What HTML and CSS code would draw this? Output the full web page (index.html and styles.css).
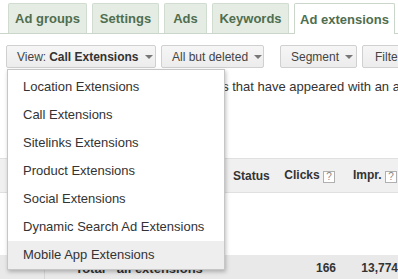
FILE: index.html
```html
<!DOCTYPE html>
<html>
<head>
<meta charset="utf-8">
<link rel="stylesheet" href="styles.css">
</head>
<body>
<div class="page">
  <div class="tabs">
    <div class="tab t1">Ad groups</div>
    <div class="tab t2">Settings</div>
    <div class="tab t3">Ads</div>
    <div class="tab t4">Keywords</div>
    <div class="tab active t5">Ad extensions</div>
  </div>
  <div class="toolbar">
    <div class="btn b-view">View: <b>Call Extensions</b><span class="caret"></span></div>
    <div class="btn b-del">All but deleted<span class="caret"></span></div>
    <div class="sep"></div>
    <div class="btn b-seg">Segment<span class="caret"></span></div>
    <div class="btn b-filter">Filter</div>
  </div>
  <p class="desc">These are statistics for call extensions that have appeared with an ad.</p>
  <div class="table">
    <div class="row head">
      <div class="c-first"></div>
      <div class="c-name"></div>
      <div class="c-status">Status</div>
      <div class="c-clicks">Clicks <span class="help">?</span></div>
      <div class="c-impr">Impr. <span class="help">?</span></div>
    </div>
    <div class="body"></div>
    <div class="row total">
      <div class="c-first"></div>
      <div class="c-name">Total - all extensions</div>
      <div class="c-status"></div>
      <div class="c-clicks">166</div>
      <div class="c-impr">13,774</div>
    </div>
  </div>
  <div class="menu">
    <div class="item">Location Extensions</div>
    <div class="item">Call Extensions</div>
    <div class="item">Sitelinks Extensions</div>
    <div class="item">Product Extensions</div>
    <div class="item">Social Extensions</div>
    <div class="item">Dynamic Search Ad Extensions</div>
    <div class="item hover">Mobile App Extensions</div>
  </div>
</div>
</body>
</html>
```
FILE: styles.css
```css
* { box-sizing: border-box; }
html, body { margin: 0; padding: 0; background: #fff; }
body { font-family: "Liberation Sans", Arial, sans-serif; color: #333; width: 398px; height: 279px; overflow: hidden; }
.page { position: relative; width: 398px; height: 279px; overflow: hidden; }

.tabs { display: flex; gap: 5px; padding: 3px 0 0 8px; height: 34px; border-bottom: 1px solid #c9d6c9; }
.tab { height: 30px; background: #e4ece4; border: 1px solid #cfdccf; border-bottom: none; border-radius: 2px 2px 0 0; font-weight: bold; font-size: 13px; color: #4f6e4f; display: flex; align-items: center; justify-content: center; }
.t1 { width: 79px; }
.t2 { width: 67px; }
.t3 { width: 43px; }
.t4 { width: 77px; }
.t5 { width: 101px; }
.tab.active { background: #fff; height: 31px; margin-bottom: -1px; border-color: #c9d6c9; }

.toolbar { display: flex; align-items: center; padding-left: 6px; margin-top: 11px; height: 23px; }
.btn { height: 23px; border: 1px solid #d0d0d0; border-radius: 2px; background: linear-gradient(#f6f6f6, #ececec); font-size: 12px; color: #444; display: flex; align-items: center; padding: 0 10px; white-space: nowrap; }
.btn b { font-weight: bold; color: #333; margin-left: 3px; }
.b-view { width: 150px; }
.b-del { width: 103px; margin-left: 5px; }
.sep { width: 1px; height: 23px; background: #e2e2e2; margin: 0 8px; }
.b-seg { width: 77px; }
.b-filter { margin-left: 5px; width: 60px; padding-left: 12px; }
.caret { width: 0; height: 0; border-left: 4px solid transparent; border-right: 4px solid transparent; border-top: 4px solid #777; margin-left: 6px; margin-top: 1px; }

.desc { margin: 11px 0 0 0; padding-left: 9px; font-size: 13px; line-height: 15px; color: #333; white-space: nowrap; }

.table { margin-top: 64px; }
.row { display: flex; align-items: center; }
.head { height: 35px; background: #f0f0f0; border-top: 1px solid #e0e0e0; border-bottom: 1px solid #e0e0e0; font-weight: bold; font-size: 12px; color: #333; }
.body { height: 62px; }
.total { height: 26px; background: #e9e9e9; font-weight: bold; font-size: 12px; color: #333; }
.total .c-name { font-size: 13px; }
.c-first { width: 45px; align-self: stretch; border-right: 1px solid #d6d6d6; }
.head .c-first { border-right: none; }
.c-name { width: 188px; text-align: center; }
.c-status { width: 50px; }
.c-clicks { width: 52px; text-align: right; font-weight: bold; white-space: nowrap; }
.c-impr { width: 63px; text-align: right; padding-right: 1px; white-space: nowrap; }
.total .c-clicks { width: 53px; }
.total .c-impr { width: 62px; padding-right: 0; }
.help { display: inline-block; width: 12px; height: 12px; border: 1px solid #b0b0b0; background: #fff; color: #888; font-size: 10px; line-height: 10px; text-align: center; font-weight: normal; vertical-align: -1px; }

.menu { position: absolute; left: 7px; top: 69px; width: 218px; background: #fff; border: 1px solid #c6c6c6; padding-top: 3px; box-shadow: 1px 2px 4px rgba(0,0,0,0.25); }
.item { height: 28px; line-height: 28px; padding-left: 15px; font-size: 13px; color: #333; }
.item.hover { background: #eeeeee; }
```
